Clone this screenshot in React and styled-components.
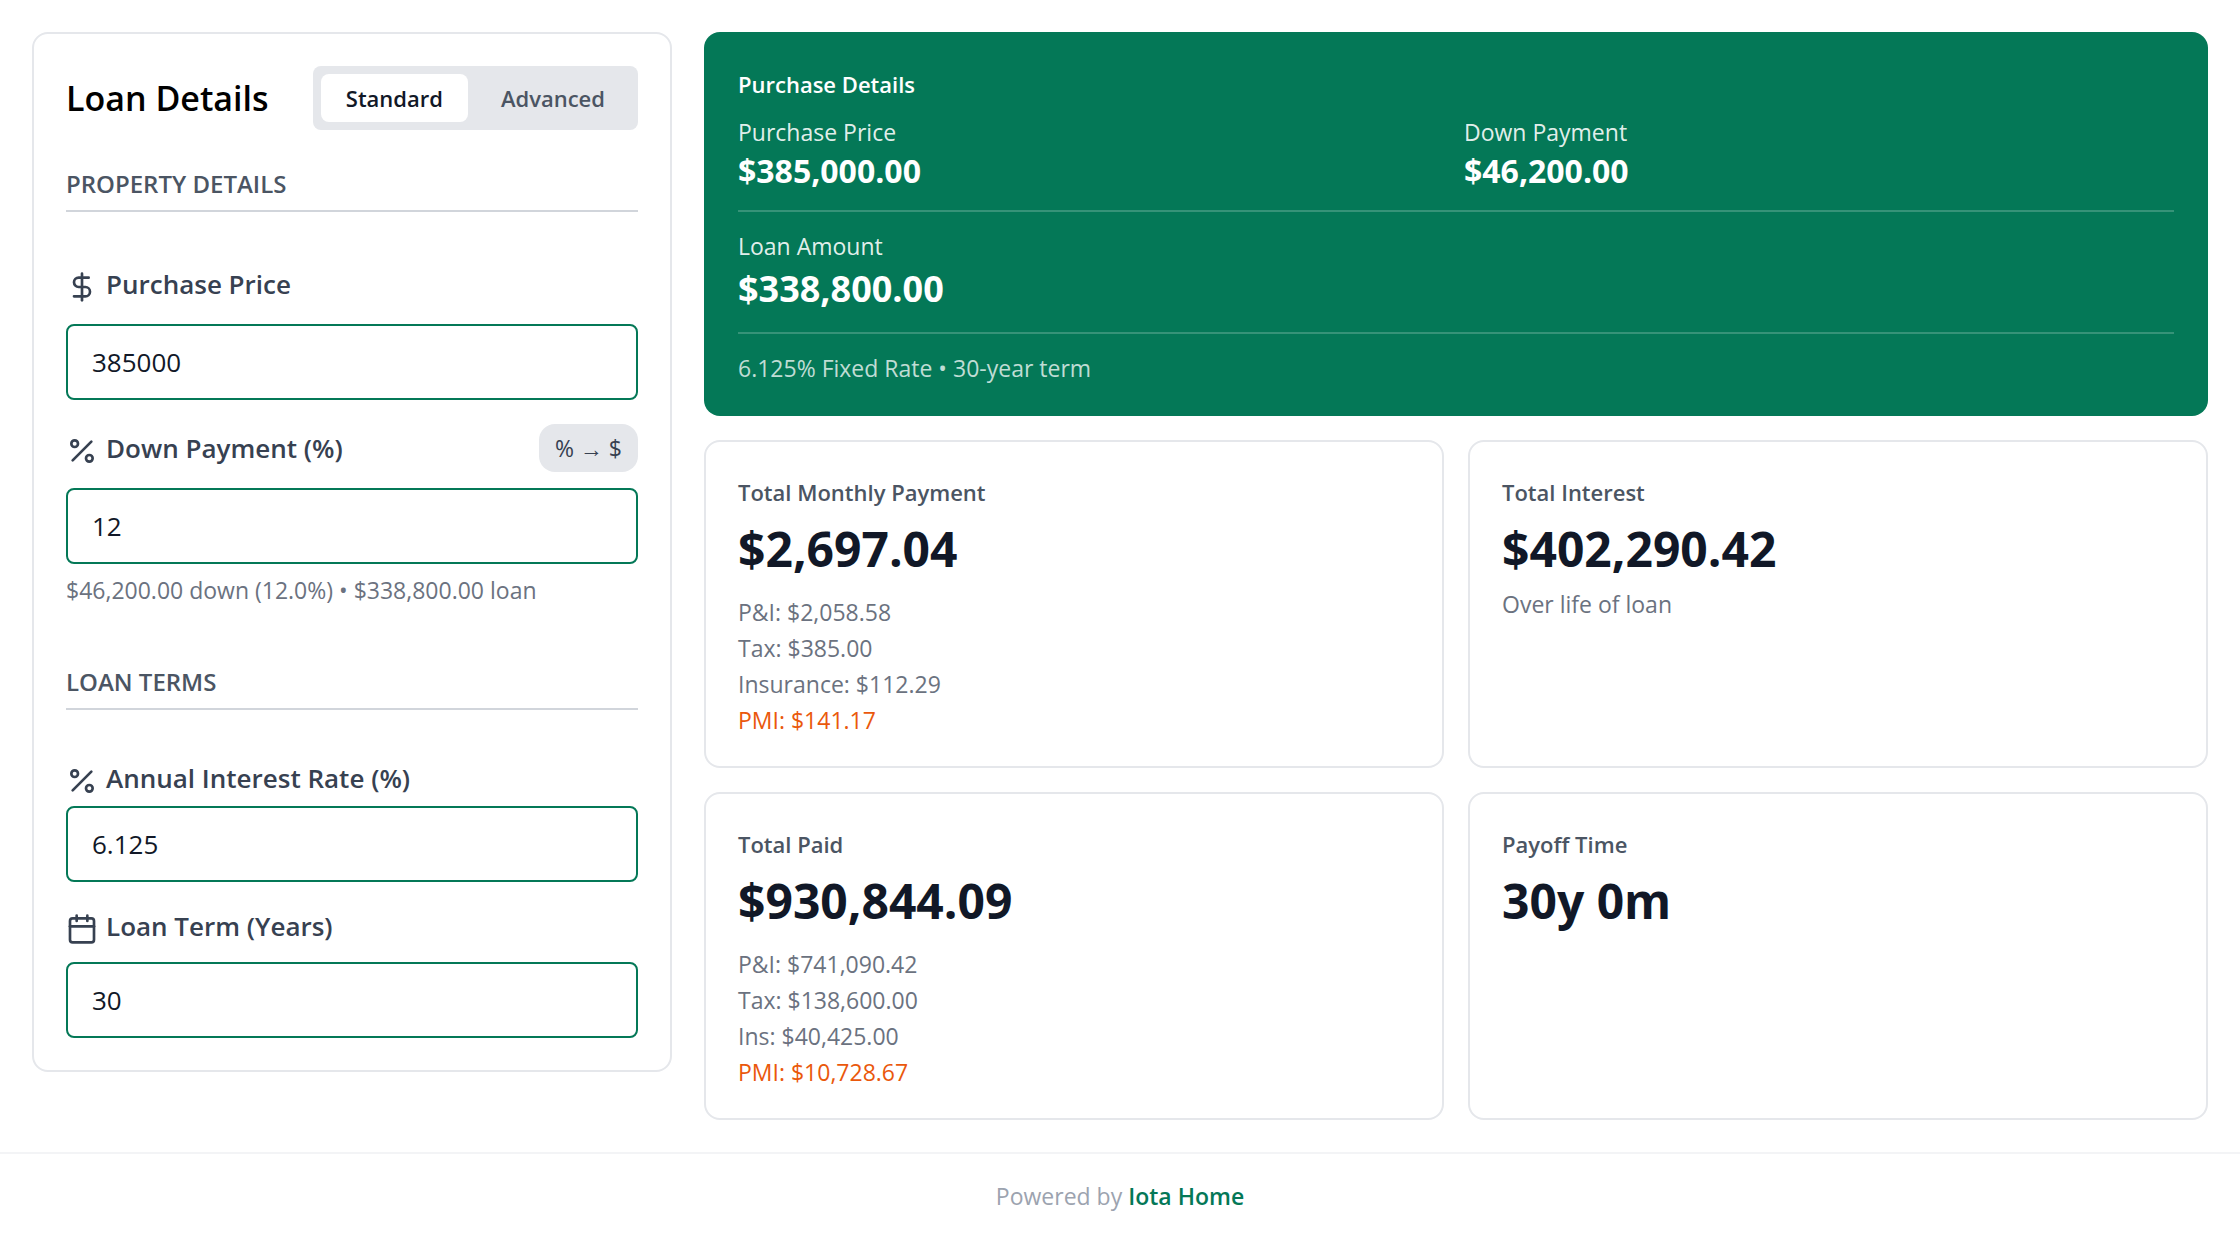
import React, { useState } from 'react';
import styled, { createGlobalStyle } from 'styled-components';
import { Calendar, DollarSign, Percent } from 'lucide-react';

const monthlyLines = [
  { text: 'P&I: $2,058.58' },
  { text: 'Tax: $385.00' },
  { text: 'Insurance: $112.29' },
  { text: 'PMI: $141.17', warn: true },
];

const paidLines = [
  { text: 'P&I: $741,090.42' },
  { text: 'Tax: $138,600.00' },
  { text: 'Ins: $40,425.00' },
  { text: 'PMI: $10,728.67', warn: true },
];

const StatCard = ({ title, value, note, lines }) => (
  <Card>
    <CardTitle>{title}</CardTitle>
    <CardValue>{value}</CardValue>
    {note && <CardNote>{note}</CardNote>}
    {lines && (
      <Breakdown>
        {lines.map((line) => (
          <BreakdownItem key={line.text} $warn={line.warn}>
            {line.text}
          </BreakdownItem>
        ))}
      </Breakdown>
    )}
  </Card>
);

const App = () => {
  const [mode, setMode] = useState('standard');
  const [values, setValues] = useState({
    price: '385000',
    down: '12',
    rate: '6.125',
    term: '30',
  });

  const handleChange = (e) => {
    setValues({ ...values, [e.target.name]: e.target.value });
  };

  return (
    <>
      <GlobalStyle />
      <Main>
        <FormPanel>
          <FormHeader>
            <FormTitle>Loan Details</FormTitle>
            <ModeSwitch>
              <ModeButton type="button" $active={mode === 'standard'} onClick={() => setMode('standard')}>
                Standard
              </ModeButton>
              <ModeButton type="button" $active={mode === 'advanced'} onClick={() => setMode('advanced')}>
                Advanced
              </ModeButton>
            </ModeSwitch>
          </FormHeader>

          <FormSection $space={38}>
            <SectionTitle>PROPERTY DETAILS</SectionTitle>
            <Field $gap={16}>
              <LabelRow $tall>
                <Label htmlFor="price">
                  <DollarSign size={32} />
                  Purchase Price
                </Label>
              </LabelRow>
              <Input id="price" name="price" inputMode="decimal" value={values.price} onChange={handleChange} />
            </Field>
            <Field $gap={16}>
              <LabelRow $tall>
                <Label htmlFor="down">
                  <Percent size={32} />
                  Down Payment (%)
                </Label>
                <UnitButton type="button">% → $</UnitButton>
              </LabelRow>
              <Input id="down" name="down" inputMode="decimal" value={values.down} onChange={handleChange} />
            </Field>
            <Hint>$46,200.00 down (12.0%) • $338,800.00 loan</Hint>
          </FormSection>

          <FormSection $space={60}>
            <SectionTitle>LOAN TERMS</SectionTitle>
            <Field $gap={8}>
              <LabelRow>
                <Label htmlFor="rate">
                  <Percent size={32} />
                  Annual Interest Rate (%)
                </Label>
              </LabelRow>
              <Input id="rate" name="rate" inputMode="decimal" value={values.rate} onChange={handleChange} />
            </Field>
            <Field $gap={16}>
              <LabelRow>
                <Label htmlFor="term">
                  <Calendar size={32} />
                  Loan Term (Years)
                </Label>
              </LabelRow>
              <Input id="term" name="term" inputMode="numeric" value={values.term} onChange={handleChange} />
            </Field>
          </FormSection>
        </FormPanel>

        <Results>
          <Summary>
            <SummaryTitle>Purchase Details</SummaryTitle>
            <SummaryColumns>
              <div>
                <SummaryLabel>Purchase Price</SummaryLabel>
                <SummaryValue>$385,000.00</SummaryValue>
              </div>
              <div>
                <SummaryLabel>Down Payment</SummaryLabel>
                <SummaryValue>$46,200.00</SummaryValue>
              </div>
            </SummaryColumns>
            <SummaryRow>
              <SummaryLabel>Loan Amount</SummaryLabel>
              <SummaryValue $large>$338,800.00</SummaryValue>
            </SummaryRow>
            <SummaryRow>
              <SummaryTerms>6.125% Fixed Rate • 30-year term</SummaryTerms>
            </SummaryRow>
          </Summary>

          <CardGrid>
            <StatCard title="Total Monthly Payment" value="$2,697.04" lines={monthlyLines} />
            <StatCard title="Total Interest" value="$402,290.42" note="Over life of loan" />
            <StatCard title="Total Paid" value="$930,844.09" lines={paidLines} />
            <StatCard title="Payoff Time" value="30y 0m" />
          </CardGrid>
        </Results>
      </Main>

      <Footer>
        Powered by <FooterLink href="#">Iota Home</FooterLink>
      </Footer>
    </>
  );
};

const GlobalStyle = createGlobalStyle`
  *, *::before, *::after {
    box-sizing: border-box;
  }

  body {
    margin: 0;
    background: #ffffff;
    color: #000000;
    font-family: "Segoe UI", "Open Sans", "Noto Sans", sans-serif;
    font-size: 23px;
    line-height: 32px;
  }

  h1, h2, h3, p, ul {
    margin: 0;
    padding: 0;
  }

  button, input {
    font-family: inherit;
  }
`;

const Main = styled.main`
  display: grid;
  grid-template-columns: 640px minmax(0, 1fr);
  align-items: start;
  gap: 32px;
  padding: 32px;
`;

const FormPanel = styled.form`
  padding: 32px;
  border: 2px solid #e5e7eb;
  border-radius: 16px;
`;

const FormHeader = styled.div`
  display: flex;
  align-items: center;
  justify-content: space-between;
`;

const FormTitle = styled.h1`
  font-size: 34px;
  font-weight: 600;
  line-height: 48px;
`;

const ModeSwitch = styled.div`
  display: flex;
  gap: 8px;
  padding: 8px;
  border-radius: 8px;
  background: #e5e7eb;
`;

const ModeButton = styled.button`
  height: 48px;
  padding: 0 25px;
  border: 0;
  border-radius: 8px;
  background: ${(props) => (props.$active ? '#ffffff' : 'transparent')};
  color: ${(props) => (props.$active ? '#111827' : '#4b5563')};
  font-size: 22px;
  font-weight: 600;
  cursor: pointer;
`;

const FormSection = styled.section`
  margin-top: ${(props) => props.$space}px;
`;

const SectionTitle = styled.h2`
  margin-bottom: 48px;
  padding-bottom: 10px;
  border-bottom: 2px solid #d1d5db;
  color: #4b5563;
  font-size: 24px;
  font-weight: 600;
  line-height: 32px;
`;

const Field = styled.div`
  display: flex;
  flex-direction: column;
  gap: ${(props) => props.$gap}px;

  & + & {
    margin-top: 24px;
  }
`;

const LabelRow = styled.div`
  display: flex;
  align-items: center;
  justify-content: space-between;
  height: ${(props) => (props.$tall ? 48 : 40)}px;
`;

const Label = styled.label`
  color: #374151;
  font-size: 26px;
  font-weight: 600;
  line-height: 40px;

  svg {
    margin-right: 8px;
    vertical-align: middle;
  }
`;

const Input = styled.input`
  width: 100%;
  height: 76px;
  padding: 0 24px;
  border: 2px solid #047857;
  border-radius: 8px;
  background: #ffffff;
  color: #111827;
  font-size: 26px;
  outline: none;
`;

const UnitButton = styled.button`
  height: 48px;
  padding: 0 16px;
  border: 0;
  border-radius: 16px;
  background: #e5e7eb;
  color: #374151;
  font-size: 23px;
  cursor: pointer;
`;

const Hint = styled.p`
  margin-top: 10px;
  color: #6b7280;
`;

const Results = styled.div`
  display: flex;
  flex-direction: column;
  gap: 24px;
`;

const Summary = styled.section`
  padding: 36px 34px 32px;
  border-radius: 16px;
  background: #047857;
  color: #ffffff;
`;

const SummaryTitle = styled.h2`
  margin-bottom: 16px;
  font-size: 22px;
  font-weight: 600;
  line-height: 32px;
`;

const SummaryColumns = styled.div`
  display: grid;
  grid-template-columns: 1fr 1fr;
  gap: 16px;
`;

const SummaryRow = styled.div`
  margin-top: 16px;
  padding-top: 18px;
  border-top: 2px solid rgba(255, 255, 255, 0.2);
`;

const SummaryLabel = styled.p`
  color: rgba(255, 255, 255, 0.9);
`;

const SummaryValue = styled.p`
  font-size: ${(props) => (props.$large ? 36 : 32)}px;
  font-weight: 700;
  line-height: ${(props) => (props.$large ? 54 : 46)}px;
`;

const SummaryTerms = styled.p`
  color: rgba(255, 255, 255, 0.75);
`;

const CardGrid = styled.div`
  display: grid;
  grid-template-columns: 1fr 1fr;
  gap: 24px;
`;

const Card = styled.section`
  padding: 34px 32px 30px;
  border: 2px solid #e5e7eb;
  border-radius: 16px;
`;

const CardTitle = styled.h3`
  margin-bottom: 8px;
  color: #4b5563;
  font-size: 22px;
  font-weight: 600;
  line-height: 32px;
`;

const CardValue = styled.p`
  color: #111827;
  font-size: 48px;
  font-weight: 700;
  line-height: 66px;
`;

const CardNote = styled.p`
  margin-top: 6px;
  color: #6b7280;
`;

const Breakdown = styled.ul`
  display: flex;
  flex-direction: column;
  gap: 4px;
  margin-top: 14px;
  list-style: none;
`;

const BreakdownItem = styled.li`
  color: ${(props) => (props.$warn ? '#ea580c' : '#6b7280')};
`;

const Footer = styled.footer`
  padding: 26px 24px 22px;
  border-top: 2px solid #f3f4f6;
  color: #9ca3af;
  text-align: center;
`;

const FooterLink = styled.a`
  color: #047857;
  font-weight: 600;
  text-decoration: none;
`;

export default App;
